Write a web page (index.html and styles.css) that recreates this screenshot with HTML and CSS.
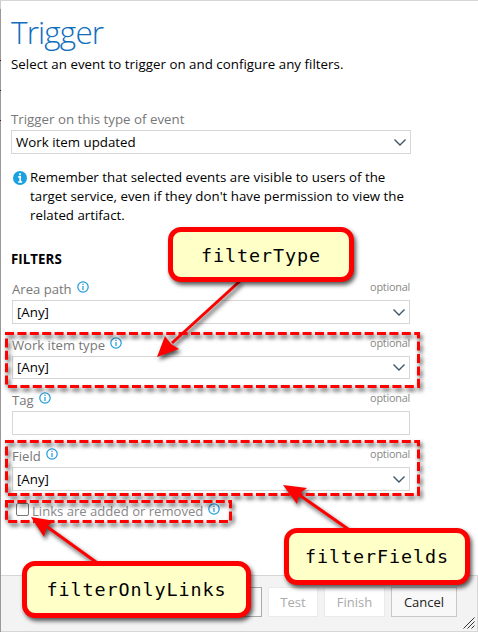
FILE: index.html
```html
<!DOCTYPE html>
<html lang="en">
<head>
<meta charset="utf-8">
<title>Trigger</title>
<link rel="stylesheet" href="styles.css">
</head>
<body>
<svg class="defs" width="0" height="0">
  <symbol id="info" viewBox="0 0 12 12"><circle cx="6" cy="6" r="5.2" fill="none" stroke="#1e9bdc" stroke-width="1.2"/><path d="M6 5v4M6 2.8v1.2" stroke="#1e9bdc" stroke-width="1.2"/></symbol>
  <symbol id="chev" viewBox="0 0 12 7"><path d="M.5 .6 6 6 11.5 .6" fill="none" stroke="#3f5468" stroke-width="1.4"/></symbol>
</svg>
<div class="dialog">
  <main class="content">
    <h1>Trigger</h1>
    <p class="lead">Select an event to trigger on and configure any filters.</p>
    <label class="event-label">Trigger on this type of event</label>
    <div class="select event"><span>Work item updated</span><svg class="chev"><use href="#chev"/></svg></div>
    <div class="note">
      <svg class="note-icon" viewBox="0 0 14 14"><circle cx="7" cy="7" r="7" fill="#1ba1e2"/><path d="M5.2 5.8H7.200V10.800M5.200 11H9.200M7 2.300V4.300" fill="none" stroke="#fff" stroke-width="1.700"/></svg>
      <p><span>Remember that selected events are visible to users of the</span><br><span>target service, even if they don't have permission to view the</span><br><span>related artifact.</span></p>
    </div>
    <h2>FILTERS</h2>
    <div class="field area"><div class="head"><span>Area path</span><svg class="info"><use href="#info"/></svg><small>optional</small></div><div class="select"><span>[Any]</span><svg class="chev"><use href="#chev"/></svg></div></div>
    <div class="field type"><div class="head"><span>Work item type</span><svg class="info"><use href="#info"/></svg><small>optional</small></div><div class="select"><span>[Any]</span><svg class="chev"><use href="#chev"/></svg></div></div>
    <div class="field tag"><div class="head"><span>Tag</span><svg class="info"><use href="#info"/></svg><small>optional</small></div><div class="select"></div></div>
    <div class="field fld"><div class="head"><span>Field</span><svg class="info"><use href="#info"/></svg><small>optional</small></div><div class="select"><span>[Any]</span><svg class="chev"><use href="#chev"/></svg></div></div>
    <div class="check"><i class="box"></i><span>Links are added or removed</span><svg class="info"><use href="#info"/></svg></div>
  </main>
  <footer>
    <button class="prev"></button><button class="off test">Test</button><button class="off finish">Finish</button><button class="cancel">Cancel</button>
    <svg class="grip" viewBox="0 0 12 12"><path d="M.5 11.500 11.500 .5M4.500 11.500 11.500 4.500M8.500 11.500 11.500 8.500" stroke="#333" fill="none"/></svg>
  </footer>
</div>
<svg class="marks" width="478" height="632" viewBox="0 0 478 632">
  <g fill="none" stroke="#f00" stroke-width="3" stroke-dasharray="9 3.400">
    <path d="M5 333.500H418.500V386.500H6.500V333"/>
    <path d="M5 441.500H418.500V494.500H6.500V441"/>
    <path d="M5 501.500H230.500V521.500H6.500V501"/>
  </g>
  <g stroke="#f00" stroke-width="3" fill="#f00">
    <path d="M240 281 172 343"/><path stroke="none" d="M157 357 165 336 171 344 179 349Z"/>
    <path d="M348 529 298 494"/><path stroke="none" d="M283 485 307 488 299 494 297 504Z"/>
    <path d="M96 562 46 526"/><path stroke="none" d="M31 517 55 521 47 526 44 537Z"/>
  </g>
</svg>
<div class="callout c-type"><span>filterType</span></div>
<div class="callout c-fields"><span>filterFields</span></div>
<div class="callout c-links"><span>filterOnlyLinks</span></div>
</body>
</html>
```
FILE: styles.css
```css
* { box-sizing: border-box; }
body { margin: 0; width: 478px; height: 632px; overflow: hidden; position: relative; background: #fff; color: #000; font: 13.3px/19px "Open Sans", "Noto Sans", sans-serif; }
.defs { position: absolute; }
.dialog { height: 632px; border-top: 1px solid #d6d6d6; display: flex; flex-direction: column; padding-left: 1px; background: linear-gradient(#ccc 8px, #999 8px 59px, #501018 59px 60px, #999 60px 89px, #501018 89px 90px, #999 90px 119px, #501018 119px 120px, #999 120px) 0 0 / 1px 100% no-repeat; }
.content { flex: 1; padding: 9px 0 0 10px; width: 410px; }
p, h1, h2 { margin: 0; }
p, span { white-space: nowrap; }
h1 { font-size: 31.5px; line-height: 44px; font-weight: 300; letter-spacing: -.85px; color: #106ebe; height: 45px; }
.lead { height: 55px; letter-spacing: .03px; }
.event-label { display: block; height: 20px; color: #777; }
.select { height: 24px; border: 1px solid #d6d6d6; background: #fff; display: flex; align-items: center; justify-content: space-between; padding: 0 4px; }
.chev { width: 12px; height: 7px; margin-left: auto; }
.note { display: flex; margin: 14px 0 0 2px; gap: 3px; }
.note-icon { width: 14px; height: 14px; margin-top: 3px; flex: none; }
h2 { font-size: 13.3px; line-height: 19px; margin-top: 25px; letter-spacing: .05px; }
.field { margin-left: 1px; width: 398px; }
.head { display: flex; height: 19px; line-height: 17px; color: #777; font-size: 13.1px; }
.info { width: 12px; height: 12px; margin: 0 0 0 5px; }
small { margin-left: auto; font-size: 10.9px; letter-spacing: -.25px; line-height: 12px; color: #888; }
.area { margin-top: 12px; }
.type { margin-top: 13px; }
.type .select { height: 23px; }
.tag { margin-top: 13px; }
.fld { margin-top: 13px; }
.check { display: flex; margin: 10px 0 0 5px; color: #888; height: 20px; line-height: 20px; font-size: 13.1px; }
.check .info { margin: 2px 0 0 5px; }
.box { width: 13px; height: 13px; border: 1px solid #767676; border-radius: 2px; margin: 2px 3px 0 0; }
footer { height: 57px; border: 1px solid #d6d6d6; border-left: 0; background: #f3f3f3; display: flex; justify-content: flex-end; padding: 11px 20px 0 0; gap: 6px; position: relative; }
button { height: 30px; font: 13px "Open Sans", sans-serif; padding: 0; border: 1px solid #c8c8c8; background: #f8f8f8; color: #222; }
.prev { width: 66px; border-color: #aaa; }
.off { background: #fff; border-color: #eaeaea; color: #aaa; }
.test { width: 50px; }
.finish { width: 61px; }
.cancel { width: 66px; }
.grip { position: absolute; right: 2px; bottom: 2px; width: 12px; height: 12px; }
.marks { position: absolute; left: 0; top: 0; filter: drop-shadow(2px 3px 2px rgba(0,0,0,.7)); }
.callout { position: absolute; background: #ffffc8; border: 5px solid #f00; border-radius: 13px; box-shadow: 2px 3px 4px rgba(0,0,0,.65); font: 18.4px/47px "DejaVu Sans Mono", monospace; letter-spacing: .92px; display: flex; justify-content: center; }
.c-type { left: 168px; top: 227px; width: 186px; height: 55px; }
.c-fields { left: 284px; top: 528px; width: 186px; height: 57px; }
.c-links { left: 22px; top: 561px; width: 229px; height: 57px; }
```
